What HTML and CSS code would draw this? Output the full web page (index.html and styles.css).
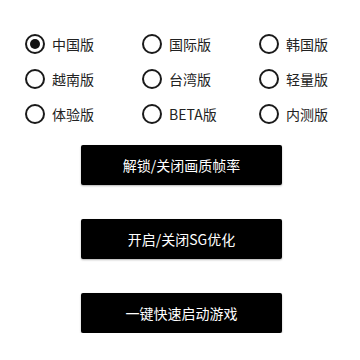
FILE: index.html
```html
<!DOCTYPE html>
<html lang="zh-CN">
<head>
    <meta charset="UTF-8">
    <meta name="viewport" content="width=device-width, initial-scale=1.0">
    <title>版本选择</title>
    <link rel="stylesheet" href="styles.css">
</head>
<body>
    <div class="versions">
        <label class="option checked"><span class="radio"></span> 中国版</label>
        <label class="option"><span class="radio"></span> 国际版</label>
        <label class="option"><span class="radio"></span> 韩国版</label>
        <label class="option"><span class="radio"></span> 越南版</label>
        <label class="option"><span class="radio"></span> 台湾版</label>
        <label class="option"><span class="radio"></span> 轻量版</label>
        <label class="option"><span class="radio"></span> 体验版</label>
        <label class="option"><span class="radio"></span> BETA版</label>
        <label class="option"><span class="radio"></span> 内测版</label>
    </div>
    <div class="actions">
        <button class="action">解锁/关闭画质帧率</button>
        <button class="action">开启/关闭SG优化</button>
        <button class="action">一键快速启动游戏</button>
    </div>
</body>
</html>
```

FILE: styles.css
```css
body {
    margin: 0;
    padding: 0;
    background-color: #fff;
    font-family: "Noto Sans CJK SC", sans-serif;
}

.versions {
    display: grid;
    grid-template-columns: repeat(3, 117px);
    grid-auto-rows: 35px;
    padding: 26px 0 0 25px;
}

.option {
    display: flex;
    align-items: center;
    gap: 7px;
    font-size: 14px;
    color: #222;
}

.radio {
    box-sizing: border-box;
    width: 20px;
    height: 20px;
    border: 2px solid #1a1a1a;
    border-radius: 50%;
    display: flex;
    align-items: center;
    justify-content: center;
}

.option.checked .radio::after {
    content: "";
    width: 10px;
    height: 10px;
    border-radius: 50%;
    background-color: #111;
}

.actions {
    display: flex;
    flex-direction: column;
    gap: 34px;
    margin: 14px 0 0 81px;
}

.action {
    width: 201px;
    height: 40px;
    background-color: #000;
    color: #fff;
    border: none;
    border-radius: 2px;
    box-shadow: 0 1px 2px rgba(0, 0, 0, 0.3);
    font-family: "Noto Sans CJK SC", sans-serif;
    font-size: 14px;
    cursor: pointer;
}
```
